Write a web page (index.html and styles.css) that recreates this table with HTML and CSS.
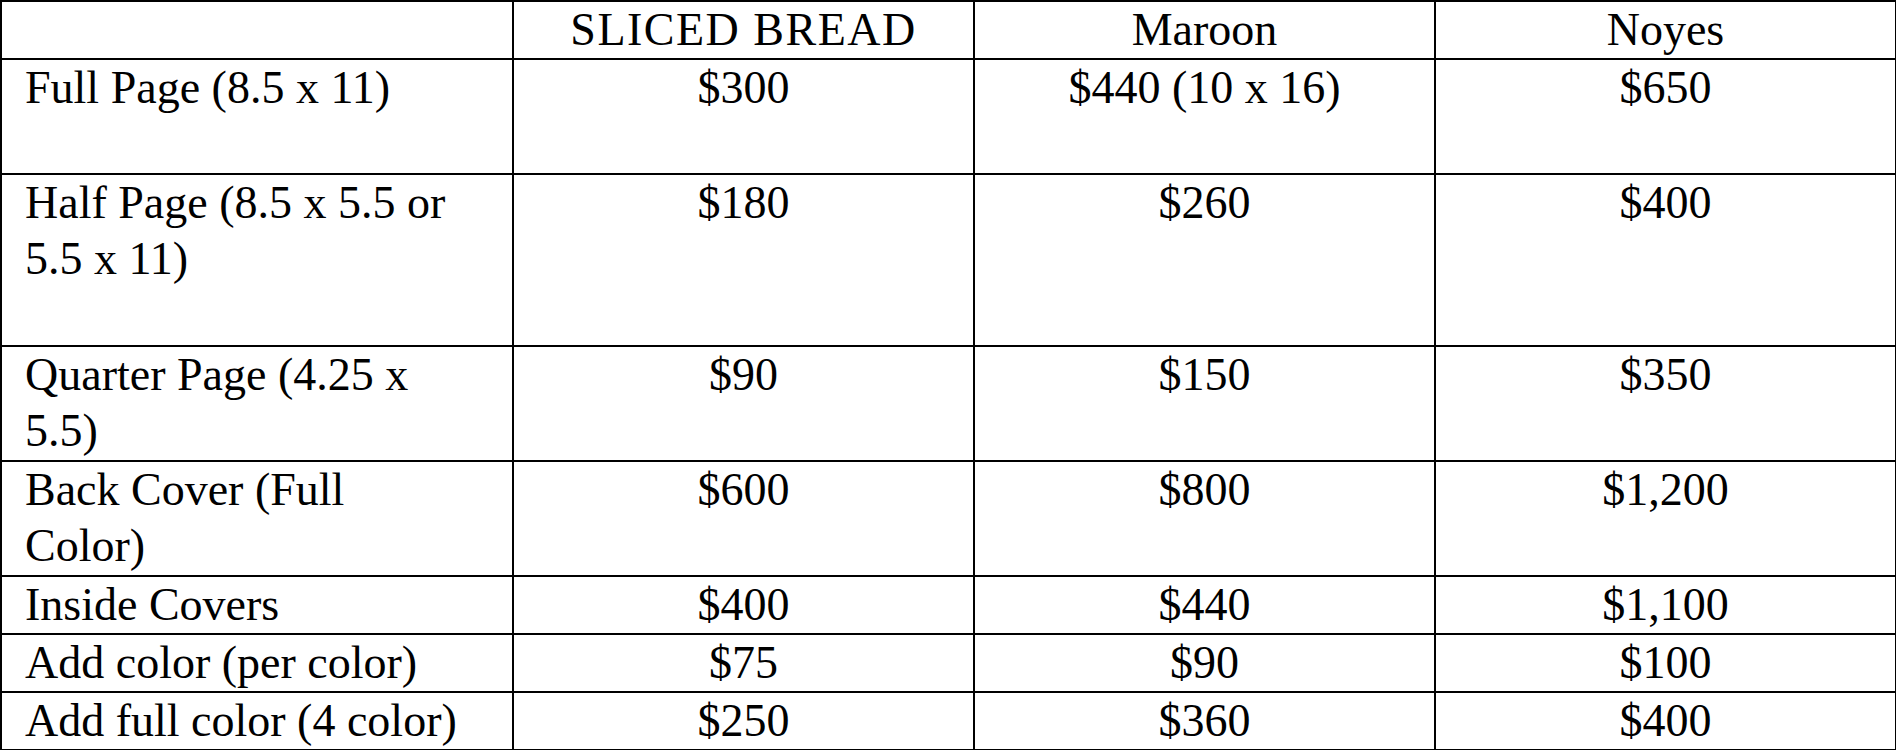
FILE: index.html
```html
<!DOCTYPE html>
<html>
<head>
<meta charset="utf-8">
<link rel="stylesheet" href="styles.css">
</head>
<body>
<table class="rates">
  <colgroup>
    <col class="c-label">
    <col class="c-val">
    <col class="c-val">
    <col class="c-val">
  </colgroup>
  <tr class="h1">
    <td class="label"></td>
    <td class="head">SLICED BREAD</td>
    <td>Maroon</td>
    <td>Noyes</td>
  </tr>
  <tr class="h2">
    <td class="label">Full Page (8.5 x 11)</td>
    <td>$300</td>
    <td>$440 (10 x 16)</td>
    <td>$650</td>
  </tr>
  <tr class="h3">
    <td class="label">Half Page (8.5 x 5.5 or 5.5 x 11)</td>
    <td>$180</td>
    <td>$260</td>
    <td>$400</td>
  </tr>
  <tr class="h2">
    <td class="label">Quarter Page (4.25 x 5.5)</td>
    <td>$90</td>
    <td>$150</td>
    <td>$350</td>
  </tr>
  <tr class="h2">
    <td class="label">Back Cover (Full Color)</td>
    <td>$600</td>
    <td>$800</td>
    <td>$1,200</td>
  </tr>
  <tr class="h1">
    <td class="label">Inside Covers</td>
    <td>$400</td>
    <td>$440</td>
    <td>$1,100</td>
  </tr>
  <tr class="h1">
    <td class="label">Add color (per color)</td>
    <td>$75</td>
    <td>$90</td>
    <td>$100</td>
  </tr>
  <tr class="h1">
    <td class="label">Add full color (4 color)</td>
    <td>$250</td>
    <td>$360</td>
    <td>$400</td>
  </tr>
</table>
</body>
</html>
```
FILE: styles.css
```css
html, body {
  margin: 0;
  padding: 0;
  background: #fff;
}

.rates {
  width: 1896px;
  table-layout: fixed;
  border-collapse: collapse;
  font-family: "Liberation Serif", "Times New Roman", serif;
  font-size: 46px;
  line-height: 56px;
  color: #000;
}

.c-label { width: 512px; }
.c-val { width: 461px; }

.rates td {
  border: 2px solid #000;
  padding: 0 4px;
  vertical-align: top;
  text-align: center;
}

.rates td.head {
  letter-spacing: 1.5px;
}

.rates td.label {
  text-align: left;
  padding: 0 44px 0 23px;
}

.h1 { height: 58px; }
.h2 { height: 115px; }
.h3 { height: 172px; }
```
